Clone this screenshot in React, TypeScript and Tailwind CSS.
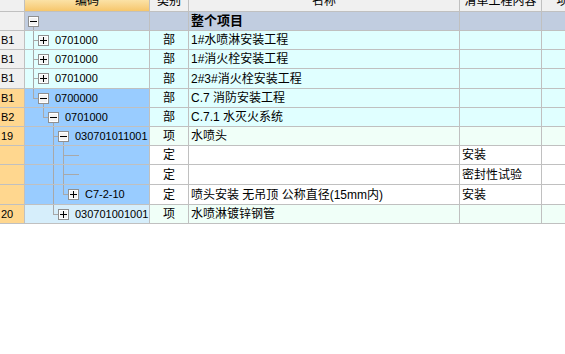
import React from "react";

type Row = {
  no: string;
  noBg: string;
  codeBg: string;
  bg: string;
  h: number;
  level: number;
  box?: "+" | "-";
  full: number[];
  half?: number;
  down?: boolean;
  code: string;
  kind: string;
  name: string;
  content?: string;
  bold?: boolean;
};

const GRAY = "bg-[#f0f0f0]";
const ORANGE = "bg-[#ffd78f]";
const CYAN = "bg-[#e0ffff]";
const BLUE = "bg-[#99ccff]";
const MINT = "bg-[#f0fff8]";
const ROOT = "bg-[#c1cde0]";

const rows: Row[] = [
  { no: "", noBg: GRAY, codeBg: ROOT, bg: ROOT, h: 19, level: 0, box: "-", full: [], down: true, code: "", kind: "", name: "整个项目", bold: true },
  { no: "B1", noBg: GRAY, codeBg: CYAN, bg: CYAN, h: 19, level: 1, box: "+", full: [0], code: "0701000", kind: "部", name: "1#水喷淋安装工程" },
  { no: "B1", noBg: GRAY, codeBg: CYAN, bg: CYAN, h: 19, level: 1, box: "+", full: [0], code: "0701000", kind: "部", name: "1#消火栓安装工程" },
  { no: "B1", noBg: GRAY, codeBg: CYAN, bg: CYAN, h: 20, level: 1, box: "+", full: [0], code: "0701000", kind: "部", name: "2#3#消火栓安装工程" },
  { no: "B1", noBg: ORANGE, codeBg: BLUE, bg: CYAN, h: 19, level: 1, box: "-", full: [], half: 0, down: true, code: "0700000", kind: "部", name: "C.7 消防安装工程" },
  { no: "B2", noBg: ORANGE, codeBg: BLUE, bg: CYAN, h: 19, level: 2, box: "-", full: [], half: 1, down: true, code: "0701000", kind: "部", name: "C.7.1 水灭火系统" },
  { no: "19", noBg: ORANGE, codeBg: BLUE, bg: MINT, h: 19, level: 3, box: "-", full: [2], down: true, code: "030701011001", kind: "项", name: "水喷头" },
  { no: "", noBg: ORANGE, codeBg: BLUE, bg: "bg-white", h: 19, level: 4, full: [2, 3], code: "", kind: "定", name: "", content: "安装" },
  { no: "", noBg: ORANGE, codeBg: BLUE, bg: "bg-white", h: 20, level: 4, full: [2, 3], code: "", kind: "定", name: "", content: "密封性试验" },
  { no: "", noBg: ORANGE, codeBg: BLUE, bg: "bg-white", h: 20, level: 4, box: "+", full: [2], half: 3, code: "C7-2-10", kind: "定", name: "喷头安装 无吊顶 公称直径(15mm内)", content: "安装" },
  { no: "20", noBg: ORANGE, codeBg: "bg-[#d6eefb]", bg: MINT, h: 19, level: 3, box: "+", full: [], half: 2, code: "030701001001", kind: "项", name: "水喷淋镀锌钢管" },
];

const LINE = "#a8a8a8";

function Toggle({ sign, x, y }: { sign: "+" | "-"; x: number; y: number }) {
  return (
    <g transform={`translate(${x},${y})`}>
      <rect x={0.5} y={0.5} width={10} height={10} fill="#f2f2f2" stroke="#8f8f8f" />
      <rect x={1.5} y={1.5} width={8} height={8} fill="none" stroke="#ffffff" />
      <line x1={2} y1={5.5} x2={9} y2={5.5} stroke="#000" />
      {sign === "+" && <line x1={5.5} y1={2} x2={5.5} y2={9} stroke="#000" />}
    </g>
  );
}

function Tree({ r }: { r: Row }) {
  const ch = r.h - 1;
  const my = Math.floor(ch / 2);
  const vx = (l: number) => 8 + 10 * l;
  const w = r.box ? 20 + 10 * r.level : 56;
  return (
    <svg width={w} height={ch} className="shrink-0" shapeRendering="crispEdges">
      {r.full.map((l) => (
        <line key={l} x1={vx(l) + 0.5} y1={0} x2={vx(l) + 0.5} y2={ch} stroke={LINE} />
      ))}
      {r.half !== undefined && (
        <line x1={vx(r.half) + 0.5} y1={0} x2={vx(r.half) + 0.5} y2={my + 1} stroke={LINE} />
      )}
      {r.level > 0 && (
        <line
          x1={vx(r.level - 1)}
          y1={my + 0.5}
          x2={r.box ? vx(r.level) - 5 : vx(r.level) + 6}
          y2={my + 0.5}
          stroke={LINE}
        />
      )}
      {r.down && (
        <line x1={vx(r.level) + 0.5} y1={my + 6} x2={vx(r.level) + 0.5} y2={ch} stroke={LINE} />
      )}
      {r.box && <Toggle sign={r.box} x={vx(r.level) - 5} y={my - 5} />}
    </svg>
  );
}

const cell = "border-r border-[#c0c0c0] h-full overflow-hidden";
const cjk = "font-['Liberation_Sans','Noto_Sans_CJK_SC',sans-serif]";

export default function App() {
  return (
    <div className={`w-[565px] h-[354px] overflow-hidden bg-white text-black ${cjk}`}>
      {/* header, scrolled so only the lower half of the captions shows */}
      <div className="flex h-[12px] border-b border-[#c0c0c0] bg-[#f0f0f0] text-[12px] leading-[12px] w-[620px]">
        <div className={`${cell} w-[25px]`} />
        <div className={`${cell} w-[125px] bg-gradient-to-b from-[#fbe2a6] to-[#f6c66b] flex justify-center`}>
          <span className="-mt-[5px]">编码</span>
        </div>
        <div className={`${cell} w-[39px] flex justify-center`}>
          <span className="-mt-[5px]">类别</span>
        </div>
        <div className={`${cell} w-[271px] flex justify-center`}>
          <span className="-mt-[5px]">名称</span>
        </div>
        <div className={`${cell} w-[82px] flex justify-center`}>
          <span className="-mt-[5px]">清单工程内容</span>
        </div>
        <div className={`${cell} w-[78px] flex justify-center`}>
          <span className="-mt-[5px]">项目特征</span>
        </div>
      </div>

      {rows.map((r, i) => (
        <div
          key={i}
          className={`flex border-b border-[#c0c0c0] w-[620px] ${r.bg}`}
          style={{ height: r.h }}
        >
          <div className={`${cell} w-[25px] ${r.noBg} flex items-center pl-[1px] text-[11px] font-['Liberation_Sans',sans-serif]`}>
            {r.no}
          </div>
          <div className={`${cell} w-[125px] ${r.codeBg} flex items-center`}>
            <Tree r={r} />
            <span className="text-[11px] font-['Liberation_Sans',sans-serif] whitespace-nowrap">{r.code}</span>
          </div>
          <div className={`${cell} w-[39px] flex items-center justify-center text-[12px]`}>{r.kind}</div>
          <div
            className={`${cell} w-[271px] flex items-center pl-[2px] whitespace-nowrap ${
              r.bold ? "text-[13px] font-bold" : "text-[12px]"
            }`}
          >
            {r.name}
          </div>
          <div className={`${cell} w-[82px] flex items-center pl-[2px] text-[12px] whitespace-nowrap`}>
            {r.content ?? ""}
          </div>
          <div className={`${cell} w-[78px]`} />
        </div>
      ))}
    </div>
  );
}
